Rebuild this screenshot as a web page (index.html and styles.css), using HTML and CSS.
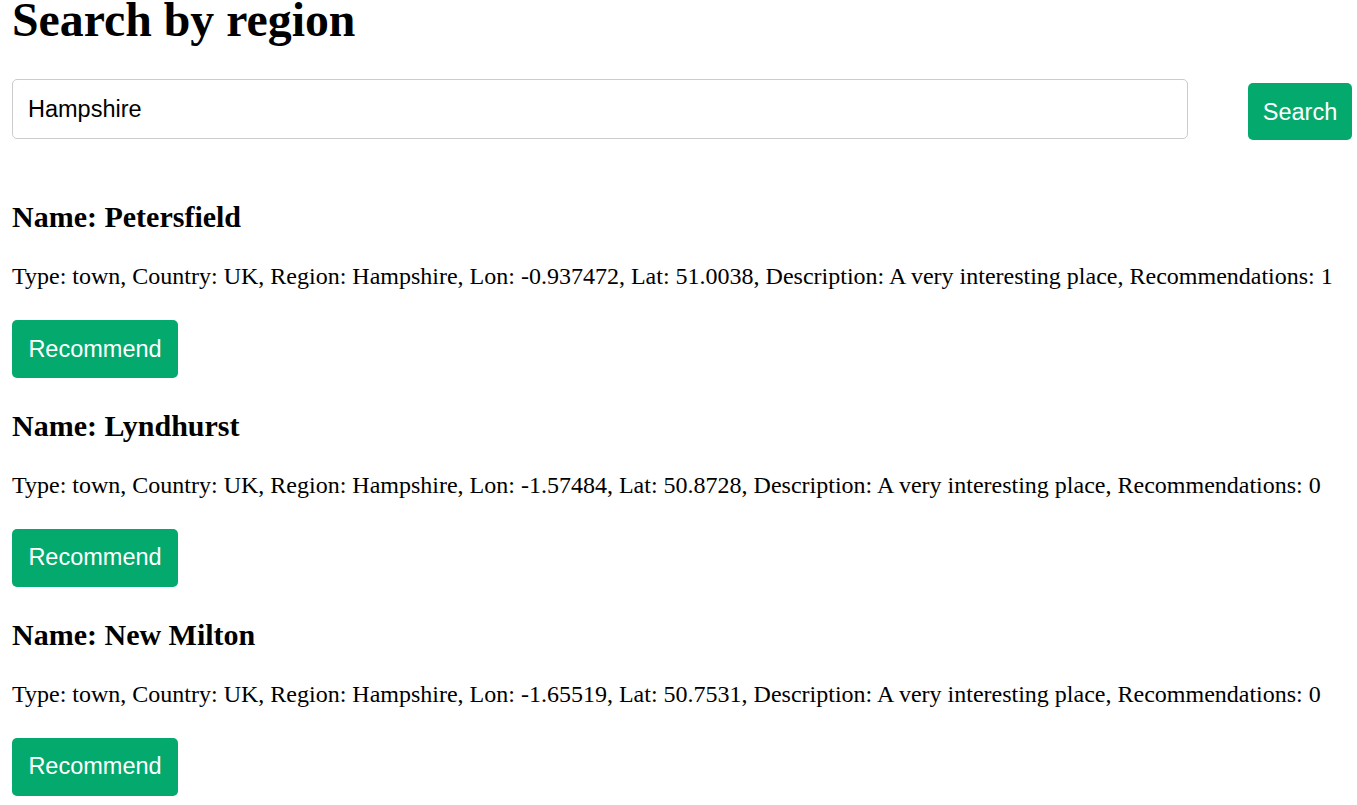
FILE: index.html
```html
<!DOCTYPE html>
<html lang="en">
<head>
<meta charset="utf-8">
<title>Search by region</title>
<link rel="stylesheet" href="styles.css">
</head>
<body>
<h1 class="page-title">Search by region</h1>
<form class="search-form">
  <input class="search-input" type="text" value="Hampshire">
  <button class="btn btn-search" type="button">Search</button>
</form>
<div class="results">
  <div class="place">
    <h2 class="place-name">Name: Petersfield</h2>
    <p class="place-info">Type: town, Country: UK, Region: Hampshire, Lon: -0.937472, Lat: 51.0038, Description: A very interesting place, Recommendations: 1</p>
    <button class="btn btn-recommend" type="button">Recommend</button>
  </div>
  <div class="place">
    <h2 class="place-name">Name: Lyndhurst</h2>
    <p class="place-info">Type: town, Country: UK, Region: Hampshire, Lon: -1.57484, Lat: 50.8728, Description: A very interesting place, Recommendations: 0</p>
    <button class="btn btn-recommend" type="button">Recommend</button>
  </div>
  <div class="place">
    <h2 class="place-name">Name: New Milton</h2>
    <p class="place-info">Type: town, Country: UK, Region: Hampshire, Lon: -1.65519, Lat: 50.7531, Description: A very interesting place, Recommendations: 0</p>
    <button class="btn btn-recommend" type="button">Recommend</button>
  </div>
</div>
</body>
</html>
```
FILE: styles.css
```css
html, body {
  overflow: hidden;
}
body {
  margin: 0 0 0 12px;
  font-family: "Liberation Serif", "Times New Roman", serif;
  color: #000;
  background: #fff;
}
.page-title {
  margin: 0;
  font-size: 47.8px;
  line-height: 40px;
  font-weight: bold;
}
.search-form {
  display: flex;
  align-items: flex-start;
  margin: 39px 0 0;
}
.search-input {
  flex: none;
  box-sizing: border-box;
  width: 1176px;
  height: 60px;
  padding: 0 15px;
  border: 1px solid #ccc;
  border-radius: 5px;
  font-family: "Liberation Sans", Arial, sans-serif;
  font-size: 23.5px;
  color: #000;
  outline: none;
}
.btn {
  box-sizing: border-box;
  border: none;
  border-radius: 5px;
  background: #04aa6d;
  color: #fff;
  font-family: "Liberation Sans", Arial, sans-serif;
  font-size: 23.5px;
  line-height: 27px;
  cursor: pointer;
}
.btn-search {
  margin: 4px 0 0 60px;
  height: 57px;
  width: 104px;
  padding: 2px 0 0;
}
.results {
  margin-top: 60px;
}
.place {
  margin-bottom: 30.6px;
}
.place:last-child {
  margin-bottom: 0;
}
.place-name {
  margin: 0 0 29.2px;
  font-size: 30px;
  font-weight: bold;
}
.place-info {
  margin: 0 0 30px;
  font-size: 24px;
}
.btn-recommend {
  display: block;
  width: 166px;
  height: 58px;
  padding: 0;
}
```
